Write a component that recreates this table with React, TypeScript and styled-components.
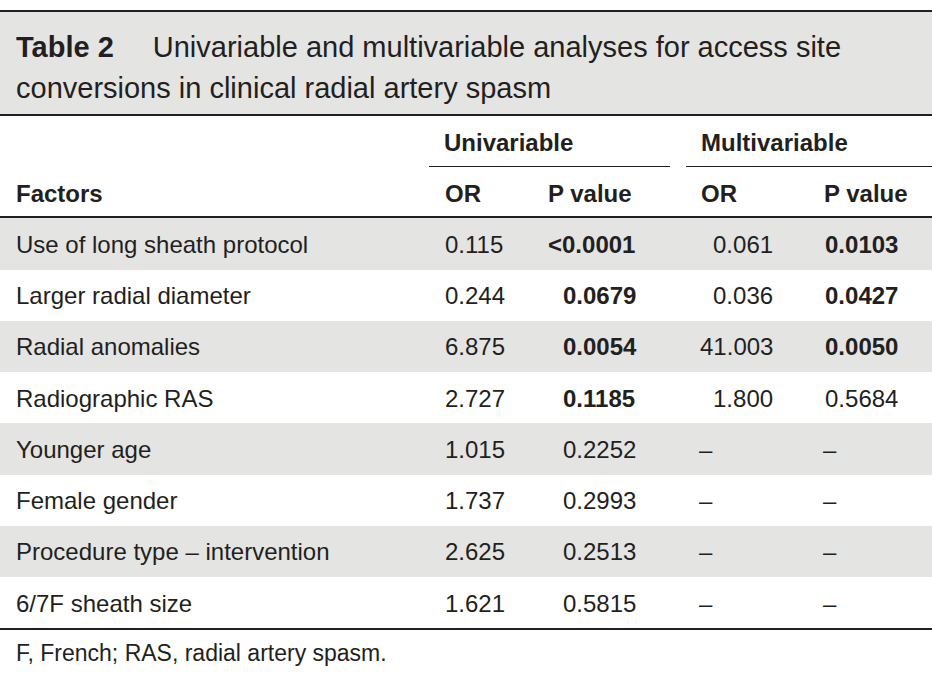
import React from 'react';
import styled, { createGlobalStyle } from 'styled-components';

const ink = '#231f20';
const shade = '#e4e4e3';

const GlobalStyle = createGlobalStyle`
  html, body {
    margin: 0;
    padding: 0;
    background: #fff;
  }
  body {
    font-family: "Liberation Sans", Arial, sans-serif;
    color: ${ink};
  }
`;

const Page = styled.div`
  width: 932px;
  padding-top: 10px;
`;

const Caption = styled.div`
  background: ${shade};
  border-top: 2px solid ${ink};
  border-bottom: 2px solid ${ink};
  padding: 14.5px 16px 5.5px;
  font-size: 29px;
  line-height: 41px;
`;

const CaptionLine = styled.div`
  display: flex;
  white-space: nowrap;
`;

const Label = styled.b`
  font-weight: 700;
  margin-right: 39px;
`;

const Table = styled.table`
  width: 932px;
  border-collapse: separate;
  border-spacing: 0;
  table-layout: fixed;
  font-size: 24px;
  line-height: 28px;
`;

const GroupHead = styled.th`
  padding: 12.7px 0 0;
  text-align: left;
  font-weight: 700;
  vertical-align: top;
`;

const GroupLabel = styled.div<{ $gap?: number }>`
  margin-right: ${(p) => p.$gap ?? 0}px;
  padding: 0 0 9.3px 15px;
  border-bottom: 1.5px solid ${ink};
`;

const ColHead = styled.th<{ $pad?: number }>`
  padding: 13.2px 0 8.3px ${(p) => p.$pad ?? 16}px;
  text-align: left;
  font-weight: 700;
  vertical-align: top;
  border-bottom: 2px solid ${ink};
`;

const Row = styled.tr`
  height: 51.25px;

  &:nth-child(odd) {
    background: ${shade};
  }
`;

const Cell = styled.td<{ $pad?: number; $bold?: boolean }>`
  box-sizing: border-box;
  height: 51.25px;
  padding: 12.5px 0 0 ${(p) => p.$pad ?? 16}px;
  vertical-align: top;
  white-space: nowrap;
  font-weight: ${(p) => (p.$bold ? 700 : 400)};
`;

const Hang = styled.span`
  margin-left: -15px;
`;

const Footer = styled.div`
  border-top: 2px solid ${ink};
  padding: 9px 16px 0;
  font-size: 23px;
  line-height: 28px;
`;

type Stat = { v: string; bold?: boolean };

interface IRow {
  factor: string;
  uniOr: string;
  uniP: Stat;
  multiOr: string;
  multiP: Stat;
}

const rows: IRow[] = [
  { factor: 'Use of long sheath protocol', uniOr: '0.115', uniP: { v: '<0.0001', bold: true }, multiOr: '0.061', multiP: { v: '0.0103', bold: true } },
  { factor: 'Larger radial diameter', uniOr: '0.244', uniP: { v: '0.0679', bold: true }, multiOr: '0.036', multiP: { v: '0.0427', bold: true } },
  { factor: 'Radial anomalies', uniOr: '6.875', uniP: { v: '0.0054', bold: true }, multiOr: '41.003', multiP: { v: '0.0050', bold: true } },
  { factor: 'Radiographic RAS', uniOr: '2.727', uniP: { v: '0.1185', bold: true }, multiOr: '1.800', multiP: { v: '0.5684' } },
  { factor: 'Younger age', uniOr: '1.015', uniP: { v: '0.2252' }, multiOr: '–', multiP: { v: '–' } },
  { factor: 'Female gender', uniOr: '1.737', uniP: { v: '0.2993' }, multiOr: '–', multiP: { v: '–' } },
  { factor: 'Procedure type – intervention', uniOr: '2.625', uniP: { v: '0.2513' }, multiOr: '–', multiP: { v: '–' } },
  { factor: '6/7F sheath size', uniOr: '1.621', uniP: { v: '0.5815' }, multiOr: '–', multiP: { v: '–' } },
];

// decimal alignment for the multivariable OR column
const orPad = (v: string) => (/^\d\./.test(v) ? 27 : 14);

const PValue: React.FC<{ stat: Stat }> = ({ stat }) =>
  stat.v.startsWith('<') ? (
    <>
      <Hang>&lt;</Hang>
      {stat.v.slice(1)}
    </>
  ) : (
    <>{stat.v}</>
  );

export default function App() {
  return (
    <Page>
      <GlobalStyle />
      <Caption>
        <CaptionLine>
          <Label>Table 2</Label>
          <span>Univariable and multivariable analyses for access site</span>
        </CaptionLine>
        <CaptionLine>conversions in clinical radial artery spasm</CaptionLine>
      </Caption>
      <Table>
        <colgroup>
          <col style={{ width: 429 }} />
          <col style={{ width: 103 }} />
          <col style={{ width: 154 }} />
          <col style={{ width: 122 }} />
          <col style={{ width: 124 }} />
        </colgroup>
        <thead>
          <tr>
            <GroupHead />
            <GroupHead colSpan={2}>
              <GroupLabel $gap={16}>Univariable</GroupLabel>
            </GroupHead>
            <GroupHead colSpan={2}>
              <GroupLabel>Multivariable</GroupLabel>
            </GroupHead>
          </tr>
          <tr>
            <ColHead>Factors</ColHead>
            <ColHead>OR</ColHead>
            <ColHead>P value</ColHead>
            <ColHead $pad={15}>OR</ColHead>
            <ColHead>P value</ColHead>
          </tr>
        </thead>
        <tbody>
          {rows.map((r) => (
            <Row key={r.factor}>
              <Cell>{r.factor}</Cell>
              <Cell>{r.uniOr}</Cell>
              <Cell $pad={31} $bold={r.uniP.bold}>
                <PValue stat={r.uniP} />
              </Cell>
              <Cell $pad={r.multiOr === '–' ? 13 : orPad(r.multiOr)}>{r.multiOr}</Cell>
              <Cell $pad={r.multiP.v === '–' ? 15 : 17} $bold={r.multiP.bold}>
                {r.multiP.v}
              </Cell>
            </Row>
          ))}
        </tbody>
      </Table>
      <Footer>F, French; RAS, radial artery spasm.</Footer>
    </Page>
  );
}
